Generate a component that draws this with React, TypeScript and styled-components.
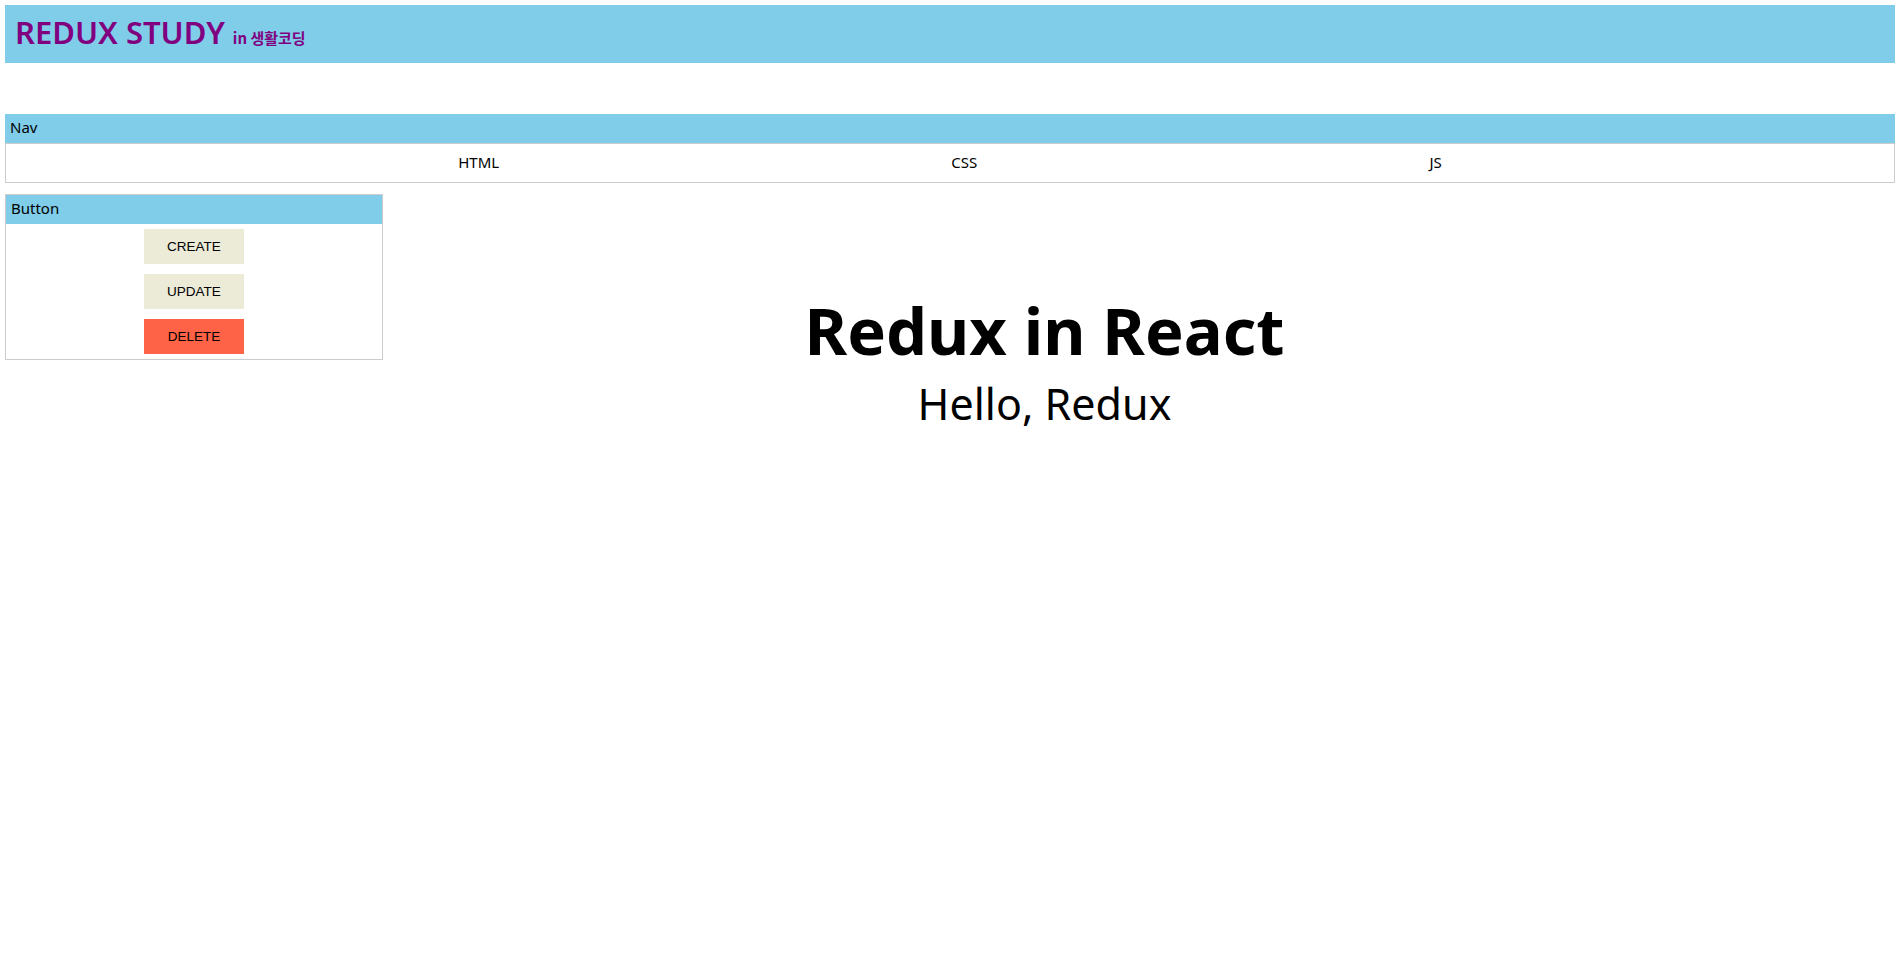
import React from "react";
import styled, { createGlobalStyle } from "styled-components";

const GlobalStyle = createGlobalStyle`
  html, body { background: #ffffff; }
  body {
    margin: 5px 7px 5px 5px;
    font-family: "Noto Sans", "Noto Sans CJK KR", sans-serif;
    color: #000;
  }
`;

const SKY = "#7fcde9";
const LINE = "#cccccc";

const Page = styled.div`
  display: flex;
  flex-direction: column;
`;

const Header = styled.header`
  height: 58px;
  background: ${SKY};
  display: flex;
  align-items: baseline;
  padding: 0 10px;
  box-sizing: border-box;
  line-height: 54px;
`;

const Title = styled.h1`
  margin: 0;
  font-size: 31px;
  font-weight: 600;
  color: #800080;
`;

const Sub = styled.span`
  margin-left: 8px;
  font-size: 15px;
  font-weight: 700;
  color: #800080;
  font-family: "Noto Sans CJK KR", "Noto Sans", sans-serif;
`;

const Section = styled.section<{ $boxed?: boolean; $width?: string }>`
  display: flex;
  flex-direction: column;
  width: ${(p) => p.$width ?? "100%"};
  box-sizing: border-box;
  border: ${(p) => (p.$boxed ? `1px solid ${LINE}` : "none")};
`;

const SectionLabel = styled.div`
  height: 29px;
  line-height: 27px;
  background: ${SKY};
  padding-left: 5px;
  font-size: 15px;
`;

const NavWrap = styled.div`
  margin-top: 51px;
`;

const NavBody = styled.nav`
  height: 40px;
  box-sizing: border-box;
  border: 1px solid ${LINE};
  display: flex;
  justify-content: space-evenly;
  align-items: center;
  padding-bottom: 2px;
`;

const NavItem = styled.a`
  font-size: 15px;
  color: #000;
  text-decoration: none;
`;

const Row = styled.div`
  margin-top: 11px;
  display: flex;
  align-items: flex-start;
`;

const ButtonList = styled.div`
  display: flex;
  flex-direction: column;
  align-items: center;
  gap: 10px;
  padding: 5px 0 5px;
`;

const ActionButton = styled.button<{ $danger?: boolean }>`
  width: 100px;
  height: 35px;
  border: none;
  background: ${(p) => (p.$danger ? "#ff6347" : "#ebebd7")};
  font-family: "Liberation Sans", Arial, sans-serif;
  font-size: 13.5px;
  color: #000;
  cursor: pointer;
`;

const Main = styled.main`
  width: 70%;
  text-align: center;
  padding-top: 97px;
`;

const Heading = styled.h1`
  margin: 0;
  font-size: 65px;
  line-height: 79px;
  font-weight: 700;
`;

const SubHeading = styled.h2`
  margin: 7px 0 0;
  font-size: 43px;
  line-height: 54px;
  font-weight: 400;
`;

export default function App() {
  return (
    <Page>
      <GlobalStyle />
      <Header>
        <Title>REDUX STUDY</Title>
        <Sub>in 생활코딩</Sub>
      </Header>
      <NavWrap>
        <Section>
          <SectionLabel>Nav</SectionLabel>
          <NavBody>
            <NavItem href="#">HTML</NavItem>
            <NavItem href="#">CSS</NavItem>
            <NavItem href="#">JS</NavItem>
          </NavBody>
        </Section>
      </NavWrap>
      <Row>
        <Section $boxed $width="20%">
          <SectionLabel>Button</SectionLabel>
          <ButtonList>
            <ActionButton>CREATE</ActionButton>
            <ActionButton>UPDATE</ActionButton>
            <ActionButton $danger>DELETE</ActionButton>
          </ButtonList>
        </Section>
        <Main>
          <Heading>Redux in React</Heading>
          <SubHeading>Hello, Redux</SubHeading>
        </Main>
      </Row>
    </Page>
  );
}
